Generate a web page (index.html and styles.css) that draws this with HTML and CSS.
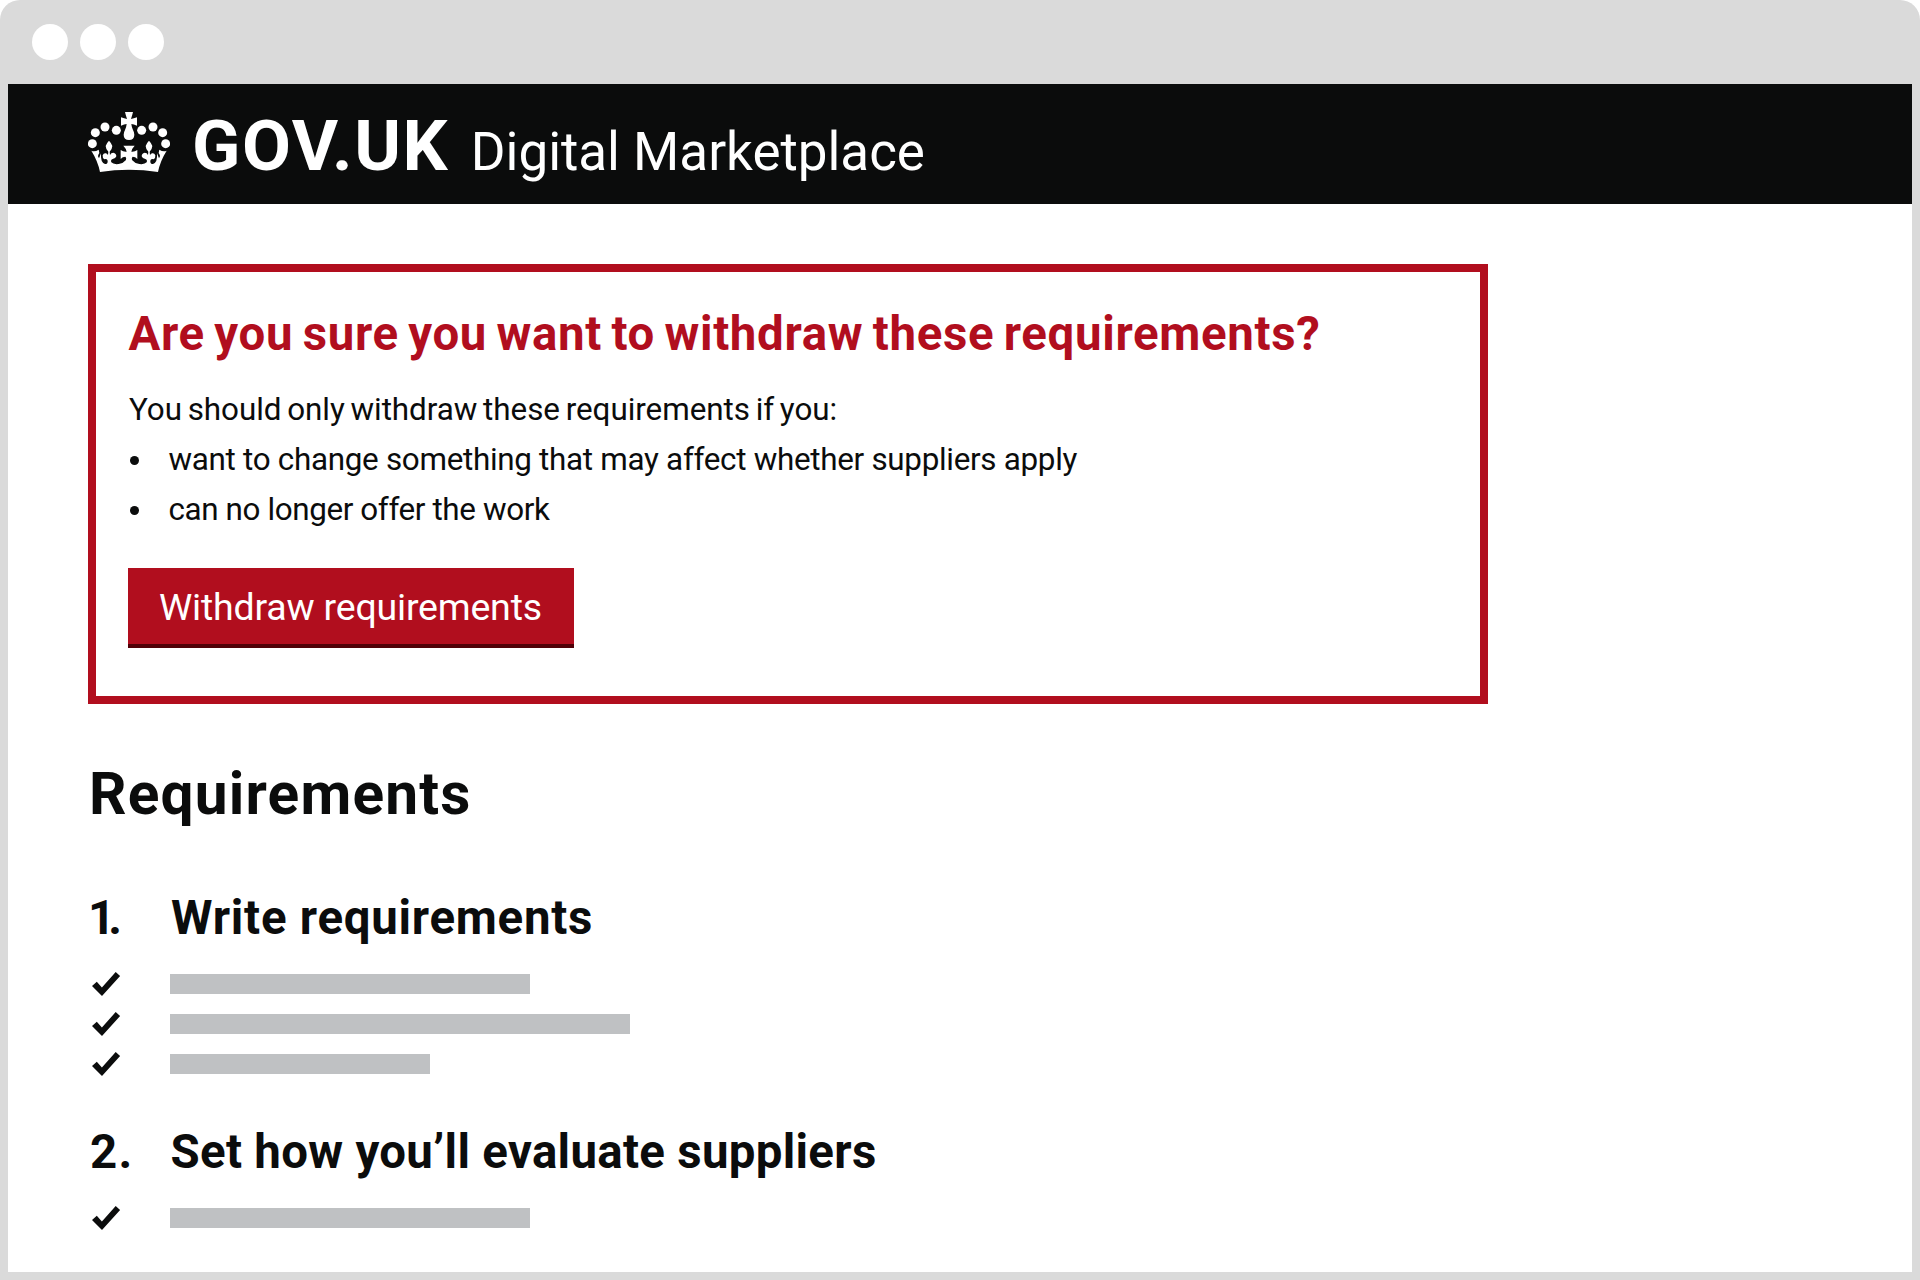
FILE: index.html
```html
<!DOCTYPE html>
<html lang="en">
<head>
<meta charset="utf-8">
<title>Digital Marketplace</title>
<link rel="stylesheet" href="styles.css">
</head>
<body>
<svg class="sprite" aria-hidden="true">
  <symbol id="tick" viewBox="88 964 40 40">
    <path d="M92 986l4.800-4.200 5.100 5.700L115.700 972l4.400 4L102 996z"/>
  </symbol>
</svg>
<div class="window">
  <div class="titlebar"><span class="dot"></span><span class="dot"></span><span class="dot"></span></div>
  <div class="page">
    <header class="header">
      <svg class="crown" viewBox="54 36 246 180" aria-hidden="true">
        <defs>
          <g id="half">
            <circle cx="76" cy="98" r="13.500"/>
            <circle cx="105" cy="81" r="13.500"/>
            <circle cx="139" cy="91" r="13.500"/>
            <circle cx="67" cy="131" r="13.500"/>
            <path d="M177.500 36h-12.500q2 9 6 21-8-1-18-5v25q10-4 17-5-1 10-5 18-4 7-4 14 0 16 16.500 16z"/>
            <path d="M64 152Q74 157 86 149Q90 158 85 164Q82 168 87 175L93 160Q91 188 105 192Q114 192 113 182Q111 174 103 178Q97 174 98 166Q101 158 108 160Q112 162 114 165L115 155Q107 146 107 138Q109 130 117 122Q125 130 127 138Q127 146 119 155L120 165Q123 158 130 158Q139 160 139 169Q136 177 128 177Q121 180 124 187Q130 194 146 192Q160 190 168 180Q170 172 166 170Q158 170 152 177V150Q160 156 170 155Q168 145 160 137H177.500V209Q133 209 90 216Q84 184 64 152z"/>
          </g>
        </defs>
        <use href="#half"/>
        <use href="#half" transform="translate(354 0) scale(-1 1)"/>
      </svg>
      <span class="logotype">GOV.UK</span>
      <span class="product">Digital Marketplace</span>
    </header>
    <main class="main">
      <section class="notice">
        <h1 class="notice-title">Are you sure you want to withdraw these requirements?</h1>
        <p class="lead">You should only withdraw these requirements if you:</p>
        <ul class="reasons">
          <li class="reason reason-change">want to change something that may affect whether suppliers apply</li>
          <li class="reason reason-work">can no longer offer the work</li>
        </ul>
        <button class="button" type="button">Withdraw requirements</button>
      </section>
      <h2 class="heading">Requirements</h2>
      <section class="step">
        <h3 class="step-title"><span class="number number-one">1.</span><span class="label-write">Write requirements</span></h3>
        <div class="task"><svg class="tick"><use href="#tick"/></svg><span class="bar bar-medium"></span></div>
        <div class="task"><svg class="tick"><use href="#tick"/></svg><span class="bar bar-long"></span></div>
        <div class="task"><svg class="tick"><use href="#tick"/></svg><span class="bar bar-short"></span></div>
      </section>
      <section class="step">
        <h3 class="step-title"><span class="number number-two">2.</span><span class="label-set">Set how you’ll evaluate suppliers</span></h3>
        <div class="task"><svg class="tick"><use href="#tick"/></svg><span class="bar bar-medium"></span></div>
      </section>
    </main>
  </div>
</div>
</body>
</html>
```
FILE: styles.css
```css
* { box-sizing: border-box; }
body {
  margin: 0;
  background: #fff;
  color: #0b0c0c;
  font-family: Roboto, "Noto Sans", sans-serif;
}
h1, h2, h3, p, ul { margin: 0; padding: 0; }
.sprite { display: none; }

.window {
  height: 1280px;
  padding: 0 8px 8px;
  background: #dadada;
  border-radius: 20px 20px 0 0;
  display: flex;
  flex-direction: column;
}
.titlebar {
  height: 84px;
  padding: 0 24px;
  display: flex;
  align-items: center;
  gap: 12px;
}
.dot { width: 36px; height: 36px; border-radius: 50%; background: #fff; }
.page { flex: 1; background: #fff; }

.header {
  height: 120px;
  padding: 12px 80px 0;
  background: #0b0c0c;
  color: #fff;
  display: flex;
  align-items: baseline;
}
.crown {
  width: 82px;
  height: 60px;
  margin: 16px 22px 0 0;
  align-self: flex-start;
  fill: #fff;
}
.logotype {
  font-size: 71px;
  font-weight: 700;
  line-height: 100px;
  letter-spacing: 1.560px;
  margin-right: 21.500px;
}
.product { font-size: 53px; line-height: 1; letter-spacing: -0.030px; }

.main { padding: 60px 80px 0; }
.notice {
  width: 1400px;
  height: 440px;
  padding: 32px;
  border: 8px solid #b10e1e;
}
.notice-title {
  color: #b10e1e;
  font-size: 47.400px;
  line-height: 60px;
  letter-spacing: 0.680px;
  word-spacing: -3px;
  padding-left: 0.500px;
  margin-bottom: 21px;
  white-space: nowrap;
}
.lead, .reason { font-size: 31.400px; line-height: 50px; letter-spacing: -0.300px; }
.lead { padding-left: 1px; letter-spacing: -0.042px; word-spacing: -2px; }
.reasons { list-style: none; }
.reason { display: flex; align-items: center; }
.reason::before {
  content: "";
  width: 9px;
  height: 9px;
  margin: 1px 30px 0 1.500px;
  border-radius: 50%;
  background: #0b0c0c;
}
.reason-work { letter-spacing: -0.384px; }
.button {
  display: block;
  width: 446px;
  height: 80px;
  margin-top: 33px;
  padding: 1px 0 0 31px;
  border: 0;
  border-bottom: 4px solid #500007;
  background: #b10e1e;
  color: #fff;
  font: 37.500px/74px Roboto, "Noto Sans", sans-serif;
  letter-spacing: -0.198px;
  text-align: left;
}

.heading {
  margin-top: 50px;
  padding-left: 1px;
  font-size: 58.600px;
  line-height: 80px;
  letter-spacing: 1.193px;
}
.step { padding-top: 54px; }
.step + .step { padding-top: 38px; }
.step-title {
  display: flex;
  margin-bottom: 16px;
  font-size: 47.400px;
  line-height: 60px;
}
.number { width: 82px; }
.number-one { letter-spacing: -7px; }
.number-two { padding-left: 2px; letter-spacing: 1.400px; }
.label-write { padding-left: 1px; letter-spacing: 0.744px; }
.label-set { padding-left: 0.500px; letter-spacing: 0.306px; }
.task { display: flex; align-items: center; height: 40px; }
.tick { width: 40px; height: 40px; margin-right: 42px; fill: #0b0c0c; }
.bar { height: 20px; background: #bfc1c3; }
.bar-short { width: 260px; }
.bar-medium { width: 360px; }
.bar-long { width: 460px; }
```
